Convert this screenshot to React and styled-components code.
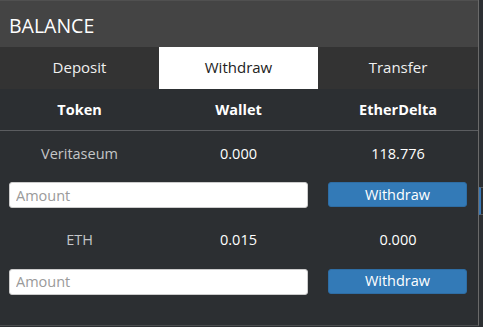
import React from "react";
import styled, { createGlobalStyle } from "styled-components";

const Global = createGlobalStyle`
  html, body { margin: 0; padding: 0; background: #2c2f32; }
  body { font-family: "Open Sans", "Liberation Sans", sans-serif; }
  * { box-sizing: border-box; }
`;

const Page = styled.div`
  display: flex;
  width: 483px;
  height: 327px;
  overflow: hidden;
  background: #2c2f32;
`;

const Panel = styled.section`
  width: 479px;
  height: 326px;
  display: flex;
  flex-direction: column;
  border-right: 1px solid #6a6a6a;
  border-bottom: 1px solid #4a4c4e;
  background: #2c2f32;
`;

const Sliver = styled.div`
  flex: 1;
  display: flex;
  flex-direction: column;
  padding-top: 187px;
`;

const SliverCell = styled.div`
  height: 28px;
  border-top: 1px solid #5a5c5e;
  border-bottom: 1px solid #5a5c5e;
  border-left: solid #3a78b5;
  border-left-width: ${(p) => (p.$mark ? "2px" : "0")};
`;

const Header = styled.header`
  height: 47px;
  background: #444444;
  border-top: 1px solid #505050;
  color: #ffffff;
  font-size: 19.5px;
  display: flex;
  align-items: center;
  padding-left: 9px;
  padding-top: 3px;
`;

const Tabs = styled.nav`
  height: 42px;
  background: #333333;
  display: grid;
  grid-template-columns: 159px 159px 1fr;
`;

const Tab = styled.div`
  display: flex;
  align-items: center;
  justify-content: center;
  font-size: 15px;
  padding-bottom: 3px;
  color: ${(p) => (p.$active ? "#222" : "#f0f0f0")};
  background: ${(p) => (p.$active ? "#ffffff" : "transparent")};
`;

const Grid3 = styled.div`
  display: grid;
  grid-template-columns: 159px 159px 1fr;
  align-items: center;
  height: ${(p) => p.$h}px;
  border-bottom: ${(p) => (p.$line ? "1px solid #5b5d60" : "none")};
`;

const HeadCell = styled.div`
  text-align: center;
  font-weight: 700;
  font-size: 14.5px;
  color: #ffffff;
`;

const Cell = styled.div`
  text-align: center;
  font-size: 14.5px;
  color: ${(p) => (p.$muted ? "#c4c6c8" : "#ffffff")};
`;

const ActionRow = styled.div`
  display: grid;
  grid-template-columns: 318px 1fr;
  padding: 7px 0 9.5px;
`;

const InputWrap = styled.div`
  padding: 0 10px 0 9px;
`;

const Amount = styled.input`
  width: 100%;
  height: 26px;
  border: 1px solid #cccccc;
  border-radius: 3px;
  background: #fff;
  font-family: "Open Sans", "Liberation Sans", sans-serif;
  font-size: 14.5px;
  padding: 0 6px;
  outline: none;
  &::placeholder { color: #9a9a9a; }
`;

const ButtonWrap = styled.div`
  padding: 0 11px 0 10px;
`;

const Button = styled.button`
  width: 100%;
  height: 25px;
  border: 1px solid #2e6da4;
  border-radius: 3px;
  background: #337ab7;
  color: #ffffff;
  font-family: "Open Sans", "Liberation Sans", sans-serif;
  font-size: 14.5px;
  padding: 0 0 1px;
  cursor: pointer;
`;

const rows = [
  { token: "Veritaseum", wallet: "0.000", delta: "118.776" },
  { token: "ETH", wallet: "0.015", delta: "0.000" },
];

export default function App() {
  return (
    <>
      <Global />
      <Page>
        <Panel>
          <Header>BALANCE</Header>
          <Tabs>
            <Tab>Deposit</Tab>
            <Tab $active>Withdraw</Tab>
            <Tab>Transfer</Tab>
          </Tabs>
          <Grid3 $h={42} $line>
            <HeadCell>Token</HeadCell>
            <HeadCell>Wallet</HeadCell>
            <HeadCell>EtherDelta</HeadCell>
          </Grid3>
          {rows.map((r) => (
            <React.Fragment key={r.token}>
              <Grid3 $h={44}>
                <Cell $muted>{r.token}</Cell>
                <Cell>{r.wallet}</Cell>
                <Cell>{r.delta}</Cell>
              </Grid3>
              <ActionRow>
                <InputWrap>
                  <Amount placeholder="Amount" />
                </InputWrap>
                <ButtonWrap>
                  <Button>Withdraw</Button>
                </ButtonWrap>
              </ActionRow>
            </React.Fragment>
          ))}
        </Panel>
        <Sliver>
          <SliverCell $mark />
        </Sliver>
      </Page>
    </>
  );
}
